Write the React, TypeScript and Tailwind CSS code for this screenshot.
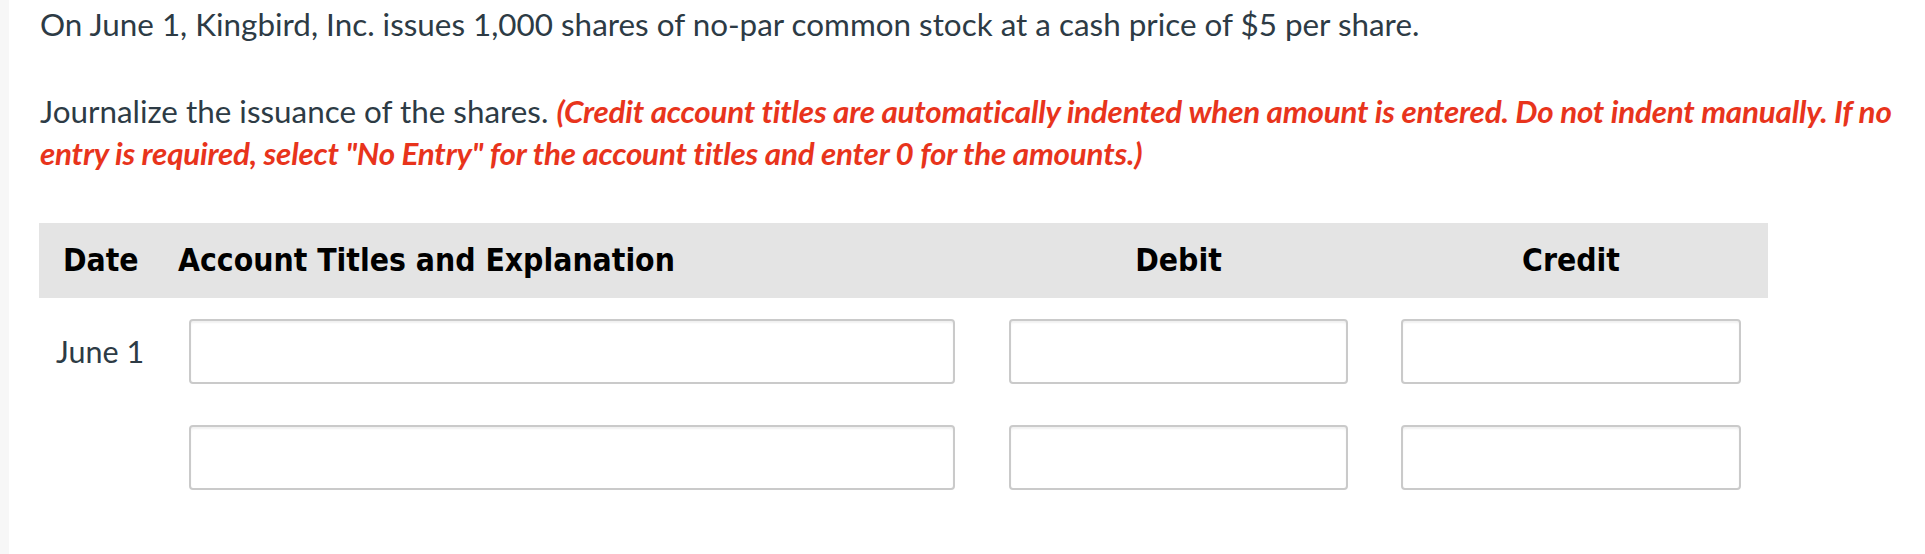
import React from "react";

const rows = [{ date: "June 1" }, { date: "" }];

function Field({ className }: { className?: string }) {
    return (
        <input
            type="text"
            className={`h-[65px] rounded-[4px] border-2 border-[#cacaca] bg-white shadow-[inset_0_2px_2px_rgba(0,0,0,0.06)] outline-none ${className ?? ""}`}
        />
    );
}

export default function App() {
    return (
        <div className="flex min-h-[554px] bg-white font-['Lato','Noto_Sans',sans-serif] text-[#2d3b45]">
            <div className="w-[9px] shrink-0 bg-[#f7f7f7]" />
            <div className="flex-1 pl-[31px] pr-4">
                <p className="w-[1870px] pt-[3px] text-[31.4px] leading-[42px]">
                    On June 1, Kingbird, Inc. issues 1,000 shares of no-par common stock at a cash price of $5 per share.
                </p>
                <p className="mt-[45px] w-[1870px] text-[31.4px] leading-[42px]">
                    Journalize the issuance of the shares.{" "}
                    <span className="font-bold italic tracking-[-0.22px] text-[#e8341c]">
                        (Credit account titles are automatically indented when amount is entered. Do not indent manually. If no entry is required, select "No Entry" for the account titles and enter 0 for the amounts.)
                    </span>
                </p>

                <div className="mt-[49px] ml-[-1px] w-[1729px]">
                    <div className="flex h-[75px] items-center bg-[#e4e4e4] font-['DejaVu_Sans_Condensed','DejaVu_Sans',sans-serif] text-[31.6px] font-bold font-stretch-condensed text-black">
                        <div className="w-[150px] pl-[24px]">Date</div>
                        <div className="ml-[-11px] w-[777px]">Account Titles and Explanation</div>
                        <div className="ml-[54px] w-[339px] text-center">Debit</div>
                        <div className="ml-[53px] w-[340px] text-center">Credit</div>
                    </div>

                    <div className="mt-[21px] flex flex-col gap-[41px]">
                        {rows.map((row, i) => (
                            <div key={i} className="flex items-center">
                                <div className="w-[150px] pl-[17px] text-[30.5px]">{row.date}</div>
                                <Field className="w-[766px]" />
                                <Field className="ml-[54px] w-[339px]" />
                                <Field className="ml-[53px] w-[340px]" />
                            </div>
                        ))}
                    </div>
                </div>
            </div>
        </div>
    );
}
